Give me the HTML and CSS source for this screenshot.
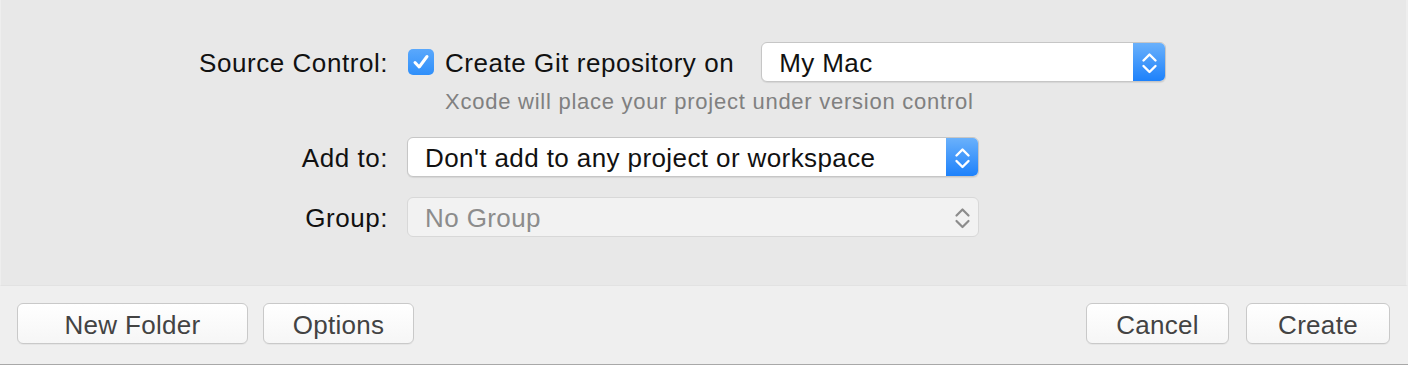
FILE: index.html
```html
<!DOCTYPE html>
<html lang="en">
<head>
    <meta charset="UTF-8">
    <title>New Project - Save</title>
    <link rel="stylesheet" href="styles.css">
</head>
<body>
    <div class="window">
        <div class="panel">
            <div class="form">
                <div class="row row-source">
                    <span class="label">Source Control:</span>
                    <div class="field">
                        <label class="check">
                            <span class="box">
                                <svg width="26" height="26" viewBox="0 0 26 26">
                                    <path d="M7 13.5 L11.2 18 L19 7.5" fill="none" stroke="#fff" stroke-width="3" stroke-linecap="round" stroke-linejoin="round"/>
                                </svg>
                            </span>
                            <span class="check-text">Create Git repository on</span>
                        </label>
                        <div class="popup popup-mac">
                            <span class="popup-text">My Mac</span>
                            <span class="stepper">
                                <svg width="33" height="40" viewBox="0 0 33 40">
                                    <path d="M10.5 18.5 L16.5 12.5 L22.5 18.5 M10.5 24 L16.5 30 L22.5 24" fill="none" stroke="#fff" stroke-width="2.4" stroke-linecap="round" stroke-linejoin="round"/>
                                </svg>
                            </span>
                        </div>
                    </div>
                </div>
                <div class="row row-hint">
                    <span class="label"></span>
                    <p class="hint">Xcode will place your project under version control</p>
                </div>
                <div class="row row-add">
                    <span class="label">Add to:</span>
                    <div class="popup popup-wide">
                        <span class="popup-text">Don't add to any project or workspace</span>
                        <span class="stepper">
                            <svg width="33" height="40" viewBox="0 0 33 40">
                                <path d="M10.5 18.5 L16.5 12.5 L22.5 18.5 M10.5 24 L16.5 30 L22.5 24" fill="none" stroke="#fff" stroke-width="2.4" stroke-linecap="round" stroke-linejoin="round"/>
                            </svg>
                        </span>
                    </div>
                </div>
                <div class="row row-group">
                    <span class="label">Group:</span>
                    <div class="popup popup-wide disabled">
                        <span class="popup-text">No Group</span>
                        <span class="stepper">
                            <svg width="33" height="40" viewBox="0 0 33 40">
                                <path d="M10.5 18.5 L16.5 12.5 L22.5 18.5 M10.5 24 L16.5 30 L22.5 24" fill="none" stroke="#8c8c8c" stroke-width="2.2" stroke-linecap="round" stroke-linejoin="round"/>
                            </svg>
                        </span>
                    </div>
                </div>
            </div>
        </div>

        <div class="footer">
            <div class="footer-group">
                <button type="button" class="btn btn-folder">New Folder</button>
                <button type="button" class="btn btn-options">Options</button>
            </div>
            <div class="footer-group footer-right">
                <button type="button" class="btn btn-cancel">Cancel</button>
                <button type="button" class="btn btn-create">Create</button>
            </div>
        </div>
    </div>
</body>
</html>
```

FILE: styles.css
```css
body {
    margin: 0;
    font-family: "Liberation Sans", Arial, sans-serif;
    background: #ffffff;
}
.window {
    width: 1408px;
    height: 364px;
    border-bottom: 1px solid #a8a8a8;
    display: flex;
    flex-direction: column;
}
.panel {
    height: 286px;
    background-color: #e8e8e8;
    border-left: 1px solid #eeeeee;
    border-right: 2px solid #eeeeee;
    border-bottom: 1px solid #e2e2e2;
    box-sizing: border-box;
}
.form {
    padding-top: 42px;
}
.row {
    display: grid;
    grid-template-columns: 387px auto;
    column-gap: 19px;
    align-items: center;
}
.label {
    text-align: right;
    font-size: 26px;
    letter-spacing: 0.55px;
    color: #111;
    padding-top: 3px;
}
.field {
    display: flex;
    align-items: center;
}
.check {
    display: flex;
    align-items: center;
    font-size: 26px;
    letter-spacing: 0.55px;
    color: #111;
    margin-left: 1px;
}
.check-text {
    padding-top: 3px;
}
.box {
    width: 26px;
    height: 26px;
    border-radius: 5px;
    background: linear-gradient(#5aa8fc, #2f8ffa);
    margin-right: 11px;
    display: flex;
}
.popup {
    height: 40px;
    box-sizing: border-box;
    border: 1px solid #c6c6c6;
    border-radius: 6px;
    background: #ffffff;
    box-shadow: 0 1px 1px rgba(0,0,0,0.08);
    display: flex;
    align-items: center;
    justify-content: space-between;
    overflow: hidden;
}
.popup-mac {
    width: 405px;
    margin-left: 27px;
}
.popup-wide {
    width: 572px;
}
.popup-text {
    padding-left: 17px;
    padding-top: 3px;
    font-size: 26px;
    letter-spacing: 0.4px;
    color: #111;
}
.stepper {
    width: 33px;
    height: 40px;
    margin-right: -1px;
    background: linear-gradient(#6cb2fb, #1b80fb);
    display: flex;
}
.disabled {
    background: #f2f2f2;
    border-color: #d8d8d8;
    box-shadow: none;
}
.disabled .popup-text {
    color: #8c8c8c;
}
.disabled .stepper {
    background: transparent;
}
.hint {
    margin: 0;
    font-size: 22px;
    letter-spacing: 0.75px;
    color: #808080;
    padding-left: 38px;
    padding-top: 3px;
}
.row-hint {
    margin-top: 4px;
}
.row-add {
    margin-top: 22px;
}
.row-group {
    margin-top: 20px;
}
.footer {
    flex: 1;
    background-color: #efefef;
    display: flex;
    justify-content: space-between;
    padding: 17px 18px 0 17px;
}
.footer-group {
    display: flex;
    gap: 15px;
}
.footer-right {
    gap: 17px;
}
.btn {
    height: 41px;
    border: 1px solid #c9c9c9;
    border-radius: 6px;
    background: linear-gradient(#ffffff, #f6f6f6);
    box-shadow: 0 1px 0 rgba(0,0,0,0.04);
    font-family: "Liberation Sans", Arial, sans-serif;
    font-size: 26px;
    letter-spacing: 0.3px;
    color: #434343;
    padding: 3px 0 0;
}
.btn-folder {
    width: 231px;
}
.btn-options {
    width: 151px;
}
.btn-cancel {
    width: 143px;
}
.btn-create {
    width: 144px;
}
```
